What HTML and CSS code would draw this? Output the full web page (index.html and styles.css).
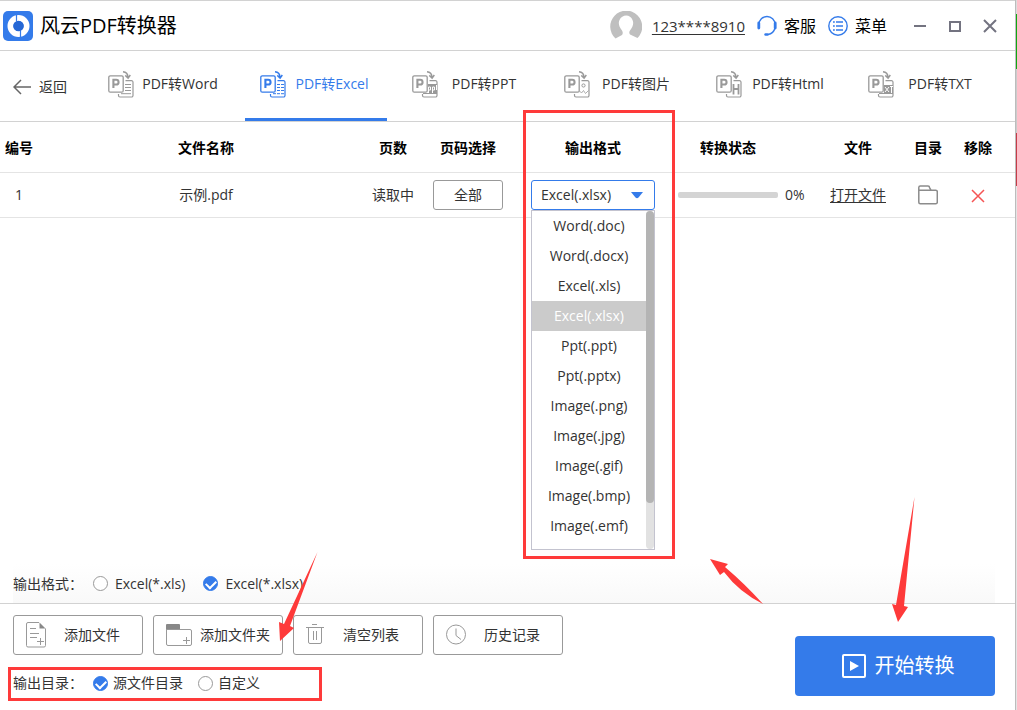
FILE: index.html
```html
<!DOCTYPE html>
<html lang="zh-CN">
<head>
<meta charset="utf-8">
<title>风云PDF转换器</title>
<link rel="stylesheet" href="styles.css">
</head>
<body>
<svg width="0" height="0" class="symbols" aria-hidden="true">
  <symbol id="pdf-base" viewBox="0 0 26 28">
    <path d="M15 .8c3 .2 4.800 2 5 5.400M17.300 4.400l2.800 2.800 2.200-3.200" fill="none" stroke="currentColor" stroke-width="1.500"/>
    <rect x=".8" y="4.800" width="14.400" height="16.400" rx="1.500" fill="none" stroke="currentColor" stroke-width="1.300"/>
    <path d="M5.400 17V8.800h2.800a2.300 2.300 0 0 1 0 4.700H5.400" fill="none" stroke="currentColor" stroke-width="2.100"/>
  </symbol>
  <symbol id="sheet" viewBox="0 0 26 28">
    <path d="M17.500 9.700h6a1.500 1.500 0 0 1 1.500 1.500V24.500a1.500 1.500 0 0 1-1.500 1.500H12a1.500 1.500 0 0 1-1.500-1.500V23" fill="none" stroke="currentColor" stroke-width="1.200"/>
  </symbol>
</svg>
<div class="screen">
<div class="app">
  <header class="titlebar">
    <svg class="logo" viewBox="0 0 30 30" aria-hidden="true">
      <rect width="30" height="30" rx="5" fill="#347bea"/>
      <circle cx="15.500" cy="15" r="8" fill="none" stroke="#fff" stroke-width="6"/>
      <circle cx="15.500" cy="15" r="5.300" fill="#2567d5"/>
      <path d="M13.500 3v7M17.500 20v7" stroke="#347bea" stroke-width="1.200"/>
    </svg>
    <h1 class="app-name">风云PDF转换器</h1>
    <svg class="avatar" viewBox="0 0 32 30" aria-hidden="true">
      <path d="M5.500 27.500A16 16 0 1 1 27.500 27L20 23.500C19 22.500 19 20.500 20 19.500 23 16 24 12 22.500 9 20.500 3 12 3 9.500 9 8 12 9 16 12 19.500 13 21 13 22.500 12 24Z" fill="#bfbfbf"/>
    </svg>
    <a class="account" href="#">123****8910</a>
    <button class="tool service">
      <svg width="20" height="22" viewBox="0 0 20 22" fill="none" stroke="#347bea"><path d="M2 9.500A8 8 0 0 1 18 9.500M18 13c-1 4-4 6-7 6.500" stroke-width="1.400"/><path d="M1.800 8v5M18.200 8v5" stroke-width="2.800" stroke-linecap="round"/><path d="M8.500 19.500h2" stroke-width="2.400" stroke-linecap="round"/></svg>
      客服</button>
    <button class="tool menu-button">
      <svg width="20" height="20" viewBox="0 0 20 20" fill="none" stroke="#347bea"><circle cx="10" cy="10" r="9.200" stroke-width="1.400"/><path d="M5 6h1.800M5 10h1.800M5 14h1.800M8 6h7M8 10h7M8 14h7" stroke-width="1.700"/></svg>
      菜单</button>
    <div class="window-buttons">
      <button aria-label="最小化"><svg width="14" height="14" viewBox="0 0 14 14"><path d="M1 7h12" stroke="#737380" stroke-width="2"/></svg></button>
      <button aria-label="最大化"><svg width="14" height="14" viewBox="0 0 14 14"><path d="M2 3h10v9H2Z" fill="none" stroke="#737380" stroke-width="2"/></svg></button>
      <button aria-label="关闭"><svg width="14" height="14" viewBox="0 0 14 14"><path d="m1 1 12 12M13 1 1 13" stroke="#737380" stroke-width="2"/></svg></button>
    </div>
  </header>

  <nav class="tabs">
    <button class="back"><svg width="18" height="16" viewBox="0 0 18 16" fill="none" stroke="#666" stroke-width="1.500"><path d="M18 8H1M8 1 1 8l7 7"/></svg>返回</button>
    <button class="tab"><svg class="tab-icon" viewBox="0 0 26 28"><use href="#pdf-base"/><use href="#sheet"/><path d="M17 13.500h6M17 16.500h6M17 19.500h6M13 22.700h10" stroke="currentColor"/></svg><span>PDF转Word</span></button>
    <button class="tab active"><svg class="tab-icon" viewBox="0 0 26 28"><use href="#pdf-base"/><use href="#sheet"/><path d="M17 13.500h3m1 0h3M17 16.500h3m1 0h3M17 19.500h3m1 0h3M13 22.700h3m1 0h3m1 0h3" stroke="currentColor"/></svg><span>PDF转Excel</span></button>
    <button class="tab"><svg class="tab-icon" viewBox="0 0 26 28"><use href="#pdf-base"/><use href="#sheet"/><path d="M16 13h9v10H11v-1h5Z" fill="currentColor"/><path d="M16.500 22v-6h2v3h-2M20.500 22v-6h2v3h-2M24.500 14v5" fill="none" stroke="#fff"/></svg><span>PDF转PPT</span></button>
    <button class="tab"><svg class="tab-icon" viewBox="0 0 26 28"><use href="#pdf-base"/><use href="#sheet"/><circle cx="19.500" cy="14.500" r="1.600" fill="none" stroke="currentColor"/><path d="m15.500 20 2 2 2-2.500 2 3 3-3" fill="none" stroke="currentColor" stroke-width=".8"/></svg><span>PDF转图片</span></button>
    <button class="tab"><svg class="tab-icon" viewBox="0 0 26 28"><use href="#pdf-base"/><use href="#sheet"/><path d="M17.500 13v10.500M22.500 13v10.500M17.500 18h5" stroke="currentColor" stroke-width="1.800"/></svg><span>PDF转Html</span></button>
    <button class="tab"><svg class="tab-icon" viewBox="0 0 26 28"><use href="#pdf-base"/><use href="#sheet"/><path d="M16 14h9v9H11v-1h5Z" fill="currentColor"/><path d="m17 16 4 5m0-5-4 5M22 15.500h3M23.500 16v6" stroke="#fff"/></svg><span>PDF转TXT</span></button>
  </nav>

  <main class="content">
    <table class="files">
      <thead>
        <tr><th class="c-no">编号</th><th>文件名称</th><th class="c-pages">页数</th><th class="c-range">页码选择</th><th class="c-format">输出格式</th><th class="c-status">转换状态</th><th class="c-file">文件</th><th class="c-dir">目录</th><th class="c-remove">移除</th></tr>
      </thead>
      <tbody>
        <tr>
          <td class="c-no">1</td>
          <td>示例.pdf</td>
          <td>读取中</td>
          <td><button class="range">全部</button></td>
          <td>
            <div class="combo">
              <select aria-label="输出格式"><option>Excel(.xlsx)</option></select>
              <svg class="caret" width="12" height="7" viewBox="0 0 12 7" aria-hidden="true"><path d="M0 0h12L7.500 5.500q-1.500 1.500-3 0Z" fill="#347bea"/></svg>
              <div class="dropdown">
                <ul role="listbox" aria-label="输出格式选项">
                  <li role="option">Word(.doc)</li>
                  <li role="option">Word(.docx)</li>
                  <li role="option">Excel(.xls)</li>
                  <li role="option" aria-selected="true">Excel(.xlsx)</li>
                  <li role="option">Ppt(.ppt)</li>
                  <li role="option">Ppt(.pptx)</li>
                  <li role="option">Image(.png)</li>
                  <li role="option">Image(.jpg)</li>
                  <li role="option">Image(.gif)</li>
                  <li role="option">Image(.bmp)</li>
                  <li role="option">Image(.emf)</li>
                </ul>
                <div class="scroll"><div class="thumb"></div></div>
              </div>
            </div>
          </td>
          <td><div class="status"><div class="bar"></div>0%</div></td>
          <td><a href="#">打开文件</a></td>
          <td><button class="plain" aria-label="打开目录"><svg width="20" height="20" viewBox="0 0 20 20" fill="none" stroke="#8c8c8c" stroke-width="1.500"><path d="M.8 5.800V2.500A1.500 1.500 0 0 1 2.300 1H10a1.500 1.500 0 0 1 1.500 1.500L13 5.200M.8 5.200h17a1.500 1.500 0 0 1 1.500 1.500v10.500a1.500 1.500 0 0 1-1.500 1.500H2.300a1.500 1.500 0 0 1-1.500-1.500Z"/></svg></button></td>
          <td class="c-remove"><button class="plain" aria-label="移除"><svg width="14" height="14" viewBox="0 0 14 14"><path d="m1 1 12 12M13 1 1 13" stroke="#f55454" stroke-width="1.500"/></svg></button></td>
        </tr>
      </tbody>
    </table>
  </main>

  <div class="format-row">
    <span class="row-label">输出格式：</span>
    <label class="choice"><input type="radio" name="format">Excel(*.xls)</label>
    <label class="choice second"><input type="radio" name="format" checked>Excel(*.xlsx)</label>
  </div>

  <footer class="footer">
    <div class="left">
      <div class="actions">
        <button><svg width="20" height="28" viewBox="0 0 20 28" fill="none" stroke="#999"><path d="M13 1.500H2A1.500 1.500 0 0 0 .5 3v21.500A1.500 1.500 0 0 0 2 26h16a1.500 1.500 0 0 0 1.500-1.500V7.500M4 7.500h6M4 12.500h9M4 16.500h7M14.500 17v7M11 20.500h7"/><path d="M13.500 1.500v6h6Z" fill="#888" stroke="none"/></svg><span>添加文件</span></button>
        <button><svg width="26" height="28" viewBox="0 0 26 28" fill="none" stroke="#999"><path d="M.5 5v18A1.500 1.500 0 0 0 2 24.500h22A1.500 1.500 0 0 0 25.500 23V10A1.500 1.500 0 0 0 24 8.500H.5M20.500 16v7M17 19.500h7"/><path d="M0 8V4q0-1 1-1h12q1 0 1 1v4Z" fill="#888" stroke="none"/></svg><span>添加文件夹</span></button>
        <button><svg width="18" height="28" viewBox="0 0 18 28" fill="none" stroke="#999"><path d="M0 6.500h18M6 3.500h5M2.500 6.500V21A1.500 1.500 0 0 0 4 22.500h10a1.500 1.500 0 0 0 1.500-1.500V6.500M7.500 10v9M10.500 10v9"/></svg><span>清空列表</span></button>
        <button><svg width="20" height="28" viewBox="0 0 20 28" fill="none" stroke="#999"><circle cx="10" cy="13.500" r="9.500"/><path d="M10 7.500v7l5 4"/></svg><span>历史记录</span></button>
      </div>
      <div class="target-row">
        <span class="row-label">输出目录：</span>
        <label class="choice"><input type="radio" name="target" checked>源文件目录</label>
        <label class="choice"><input type="radio" name="target">自定义</label>
      </div>
    </div>
    <button class="start"><svg width="24" height="24" viewBox="0 0 24 24"><rect x="1" y="1" width="22" height="22" rx="1" fill="none" stroke="#fff" stroke-width="2"/><path d="m8 7 9 5-9 5Z" fill="#fff"/></svg>开始转换</button>
  </footer>
</div>
<div class="edge"></div>
<svg class="notes" width="1017" height="710" viewBox="0 0 1017 710" aria-hidden="true">
  <g fill="none" stroke="#fe3a3a" stroke-width="3"><path d="M524.500 111.500h149v446h-149ZM9.500 668.500h311v31H9.500Z"/></g>
  <g fill="#fe3a3a"><path d="m710 559 18 5-3 3q20 17 38 37-24-12-39-32l-4 3ZM317.500 552 290 626l4 2-14 13-1-19 5 2Z"/><path d="M914.500 497 904 606l4 1-10 15-6-18 4 1Z"/></g>
</svg>
</div>
</body>
</html>
```
FILE: styles.css
```css
* { box-sizing: border-box; }
body {
  margin: 0;
  font: 14px/20px "Open Sans", "Noto Sans CJK SC", sans-serif;
  color: #333;
  background: #fff;
}
button, select, input { font: inherit; color: inherit; margin: 0; }
button { background: none; border: 0; padding: 0; }
svg { display: block; flex: none; }
a { color: inherit; text-underline-offset: 2px; }
.symbols { position: absolute; }
.screen { display: flex; position: relative; min-height: 100vh; }
.app {
  flex: 1;
  min-width: 0;
  display: flex;
  flex-direction: column;
  border-top: 1px solid #d2d2d2;
}
.edge {
  width: 2px;
  border-left: 1px solid #bcbcbc;
  background: linear-gradient(#ddd 14px, #10a810 14px 69px, #ccc 69px 133px, #c43c48 133px 186px, #e4e4e4 186px);
}

.titlebar {
  display: flex;
  align-items: center;
  height: 50px;
  padding: 0 18px 0 3px;
  border-bottom: 1px solid #d2d2d2;
  color: #000;
  font-size: 16px;
}
.logo { width: 30px; height: 30px; }
.app-name { flex: 1; margin: 0 0 0 7px; font-size: 20px; font-weight: 400; line-height: 28px; }
.avatar { width: 32px; height: 30px; margin-right: 10px; }
.account { color: #333; font-size: 15px; }
.tool { display: flex; align-items: center; gap: 7px; margin-left: 12px; }
.window-buttons { display: flex; gap: 21px; margin-left: 26px; }

.tabs {
  display: grid;
  grid-template-columns: 83px repeat(6, 1fr);
  column-gap: 10px;
  height: 71px;
  padding-right: 20px;
  border-bottom: 1px solid #d2d2d2;
}
.back { display: flex; align-items: center; gap: 8px; padding: 2px 0 0 13px; }
.tab { display: flex; align-items: center; padding: 0 9px 0 15px; border-bottom: 3px solid transparent; }
.tab-icon { width: 26px; height: 28px; color: #999; }
.tab span { flex: 1; padding-bottom: 2px; }
.tab.active { color: #347bea; border-color: #347bea; }
.tab.active .tab-icon { color: #347bea; }

.content { flex: 1; }
.files { width: 100%; table-layout: fixed; border-collapse: collapse; text-align: center; }
.files th, .files td { padding: 0; border-bottom: 1px solid #e4e4e4; }
.files th { height: 50px; padding-top: 2px; color: #000; font-weight: 700; }
.files td { height: 45px; }
.files .c-no { width: 40px; padding-right: 2px; }
.c-pages { width: 42px; }
.c-range { width: 108px; }
.c-format { width: 142px; }
.files .c-status { width: 142px; padding-right: 14px; }
.c-file { width: 104px; }
.c-dir { width: 36px; }
.files .c-remove { width: 69px; padding-right: 5px; }
.range { width: 70px; height: 30px; border: 1px solid #999; border-radius: 3px; }
.plain { vertical-align: middle; }
.combo { position: relative; width: 124px; height: 30px; margin: 0 auto; }
.combo select {
  appearance: none;
  display: block;
  width: 100%;
  height: 30px;
  padding: 0 9px;
  border: 1px solid #347bea;
  border-radius: 3px;
  background: #fff;
}
.caret { position: absolute; right: 12px; top: 12px; }
.dropdown {
  position: absolute;
  top: 30px;
  left: 0;
  z-index: 2;
  display: flex;
  width: 100%;
  height: 340px;
  border: 1px solid #c3c3cf;
  background: #fff;
}
.dropdown ul { flex: 1; margin: 0; padding: 0; list-style: none; }
.dropdown li { height: 30px; line-height: 30px; }
.dropdown li[aria-selected] { background: #cbcbcb; color: #fff; }
.scroll { width: 8px; border-radius: 4px; background: #e2e2e2; }
.thumb { height: 292px; border-radius: 4px; background: #b4b4b4; }
.status { display: flex; align-items: center; gap: 7px; padding-left: 14px; }
.bar { width: 100px; height: 6px; border-radius: 2px; background: #d4d4d4; }

.format-row, .target-row { display: flex; align-items: center; }
.format-row {
  height: 39px;
  margin: 0 20px 0 13px;
  background: linear-gradient(#fff, #f9f9f9);
}
.row-label { width: 80px; }
.choice { display: flex; align-items: center; gap: 7px; }
.second { margin-left: 18px; }
.choice input {
  appearance: none;
  width: 15px;
  height: 15px;
  border: 1px solid #999;
  border-radius: 50%;
  background: #fff;
}
.choice input:checked {
  display: grid;
  place-items: center;
  border-color: #347bea;
  background: #347bea;
}
.choice input:checked::before {
  content: "";
  width: 8px;
  height: 5px;
  border: solid #fff;
  border-width: 0 0 2px 2px;
  transform: rotate(-45deg);
}
.footer {
  display: flex;
  justify-content: space-between;
  align-items: flex-end;
  padding: 11px 20px 14px 13px;
  border-top: 1px solid #d2d2d2;
}
.left { display: flex; flex-direction: column; gap: 18px; padding-bottom: 3px; }
.actions { display: flex; gap: 10px; }
.actions button {
  display: flex;
  align-items: center;
  width: 130px;
  height: 40px;
  padding: 0 4px 0 12px;
  border: 1px solid #999;
  border-radius: 3px;
}
.actions span { flex: 1; }
.target-row .choice { gap: 5px; margin-right: 15px; }
.start {
  display: flex;
  align-items: center;
  justify-content: center;
  gap: 9px;
  width: 200px;
  height: 60px;
  padding-left: 6px;
  border-radius: 4px;
  background: #347bea;
  color: #fff;
  font-size: 20px;
}
.notes { position: absolute; top: 0; left: 0; z-index: 3; pointer-events: none; }
```
